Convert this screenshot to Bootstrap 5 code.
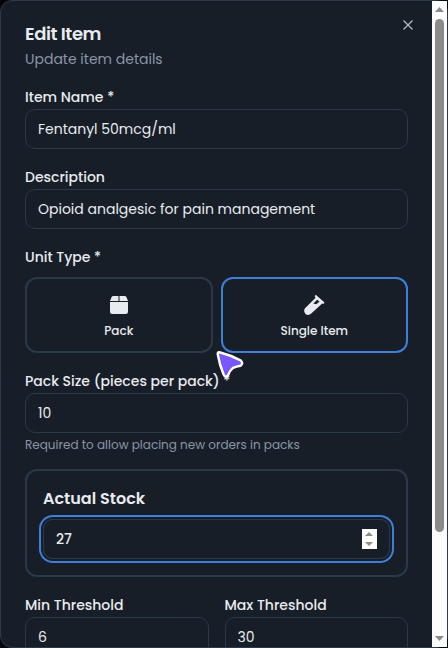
<!DOCTYPE html>
<html lang="en" data-bs-theme="dark">
<head>
<meta charset="utf-8">
<meta name="viewport" content="width=device-width, initial-scale=1">
<title>Edit Item</title>
<link href="https://cdn.jsdelivr.net/npm/bootstrap@5.3.0/dist/css/bootstrap.min.css" rel="stylesheet">
<style>
  body { background: #05070b; font-family: Poppins, Inter, sans-serif; font-size: 14px; color: #e8ebef; }
  .dialog { height: 648px; background: #171e27; border: 1px solid #2b3a4c; border-radius: 12px; }
  .pane { padding: 24px 24px 0; min-width: 0; border-radius: 11px 0 0 11px; }
  .title { font-size: 18px; line-height: 18px; font-weight: 600; letter-spacing: -.45px; color: #e8ebef; }
  .sub { line-height: 20px; margin-top: 6px; color: #8996a7; }
  .lbl { display: block; height: 24px; line-height: 24px; font-weight: 500; white-space: nowrap; }
  .form-control.field { height: 40px; padding: 0 12px; font-size: 14px; color: #e8ebef; background: #171e27; border: 1px solid #2b384a; border-radius: 10px; box-shadow: none; }
  .halves { grid-template-columns: 1fr 1fr; }
  .choice { height: 76px; border: 2px solid #2b384a; border-radius: 12px; color: #e8ebef; font-size: 12px; font-weight: 500; padding: 4px 0 0; }
  .choice.chosen { border-color: #3f7fd8; }
  .choice span { line-height: 16px; }
  .hint { font-size: 12px; line-height: 16px; color: #8996a7; white-space: nowrap; }
  .stock { border: 2px solid #2b384a; border-radius: 12px; padding: 16px; }
  .stock .lbl { font-size: 16px; font-weight: 600; }
  .ringed { border-radius: 10px; box-shadow: 0 0 0 2px #171e27, 0 0 0 4px #3f7fd8; }
  .ringed .field { font-weight: 500; }
  .spin { right: 13px; top: 10px; }
  .track { width: 15px; background: #fcfcfc; padding: 6px 0; }
  .thumb { width: 9px; height: 513px; border-radius: 5px; background: #8b8b8b; margin-top: 7px; }
  .close-x { right: 34px; top: 19px; }
  .pointer { left: 214px; top: 348px; }
</style>
<script src="https://cdn.jsdelivr.net/npm/bootstrap@5.3.0/dist/js/bootstrap.bundle.min.js"></script>
</head>
<body class="overflow-hidden position-relative">
<main class="dialog d-flex">
  <form class="pane flex-grow-1 d-flex flex-column gap-3 overflow-hidden">
    <header>
      <h1 class="title m-0">Edit Item</h1>
      <p class="sub mb-0">Update item details</p>
    </header>
    <div>
      <label class="lbl" for="name">Item Name *</label>
      <input class="form-control field" id="name" value="Fentanyl 50mcg/ml">
    </div>
    <div>
      <label class="lbl" for="desc">Description</label>
      <input class="form-control field" id="desc" value="Opioid analgesic for pain management">
    </div>
    <div>
      <span class="lbl mb-2">Unit Type *</span>
      <div class="halves d-grid gap-2">
        <button type="button" class="btn choice d-flex flex-column align-items-center justify-content-center gap-2">
          <svg width="20" height="20" viewBox="0 0 20 20" fill="#e8ebef"><path d="M4.500 1H9.500V6H1L2.500 2.200Q3 1 4.500 1ZM10.500 1H15.500Q17 1 17.500 2.200L19 6H10.500ZM1 7H19V16.500Q19 19 16.500 19H3.500Q1 19 1 16.500Z"/></svg>
          <span>Pack</span>
        </button>
        <button type="button" class="btn choice chosen d-flex flex-column align-items-center justify-content-center gap-2">
          <svg width="22" height="20" viewBox="0 0 22 20" fill="#e8ebef" fill-rule="evenodd"><path d="M12 .5Q12.700 -.3 13.600 .4L21 7Q21.600 7.700 21 8.400Q20.200 9 19.200 8.500L8 18.800Q5.300 21 2.500 18.900Q0 16.300 2 13.200L12.600 2.800Q11.400 1.600 12 .5ZM14.200 4.700L10.300 8.600L13.200 9.300L16.500 6.800Z"/></svg>
          <span>Single Item</span>
        </button>
      </div>
    </div>
    <div>
      <label class="lbl" for="size">Pack Size (pieces per pack) *</label>
      <input class="form-control field" id="size" value="10">
      <div class="hint mt-1">Required to allow placing new orders in packs</div>
    </div>
    <div class="stock">
      <label class="lbl mb-2" for="stock">Actual Stock</label>
      <div class="ringed position-relative">
        <input class="form-control field" id="stock" value="27">
        <svg class="spin position-absolute" width="15" height="20"><path fill="#fcfcfc" d="M0 0H15V20H0Z"/><path fill="#8b8b8b" d="M3 7L7 3L11 7ZM3 13H11L7 17Z"/></svg>
      </div>
    </div>
    <div class="halves d-grid gap-3">
      <div>
        <label class="lbl" for="min">Min Threshold</label>
        <input class="form-control field" id="min" value="6">
      </div>
      <div>
        <label class="lbl" for="max">Max Threshold</label>
        <input class="form-control field" id="max" value="30">
      </div>
    </div>
  </form>
  <div class="track d-flex flex-column align-items-center flex-shrink-0">
    <svg class="flex-shrink-0" width="9" height="5" fill="#8b8b8b"><path d="M0 5L4.500 0L9 5Z"/></svg>
    <div class="thumb flex-shrink-0"></div>
    <svg class="mt-auto flex-shrink-0" width="9" height="5" fill="#8b8b8b"><path d="M0 0H9L4.500 5Z"/></svg>
  </div>
</main>
<svg class="close-x position-absolute" width="12" height="12" fill="none" stroke="#b3b9c1" stroke-width="1.300"><path d="M1.500 1.500L10.500 10.500M10.500 1.500L1.500 10.500"/></svg>
<svg class="pointer position-absolute" width="32" height="34" fill="#7857ff" stroke="#fff" stroke-width="2.500" stroke-linejoin="round"><path d="M5.400 4.200Q3.400 4 3.800 6.400Q5.500 17 9.600 26.500Q11.500 30.300 14 27.200Q15.800 22.500 19 19.900Q22.500 18.300 26.500 17.700Q29.700 15.500 26.800 12.500Q17 7.200 5.400 4.200Z"/></svg>
</body>
</html>
